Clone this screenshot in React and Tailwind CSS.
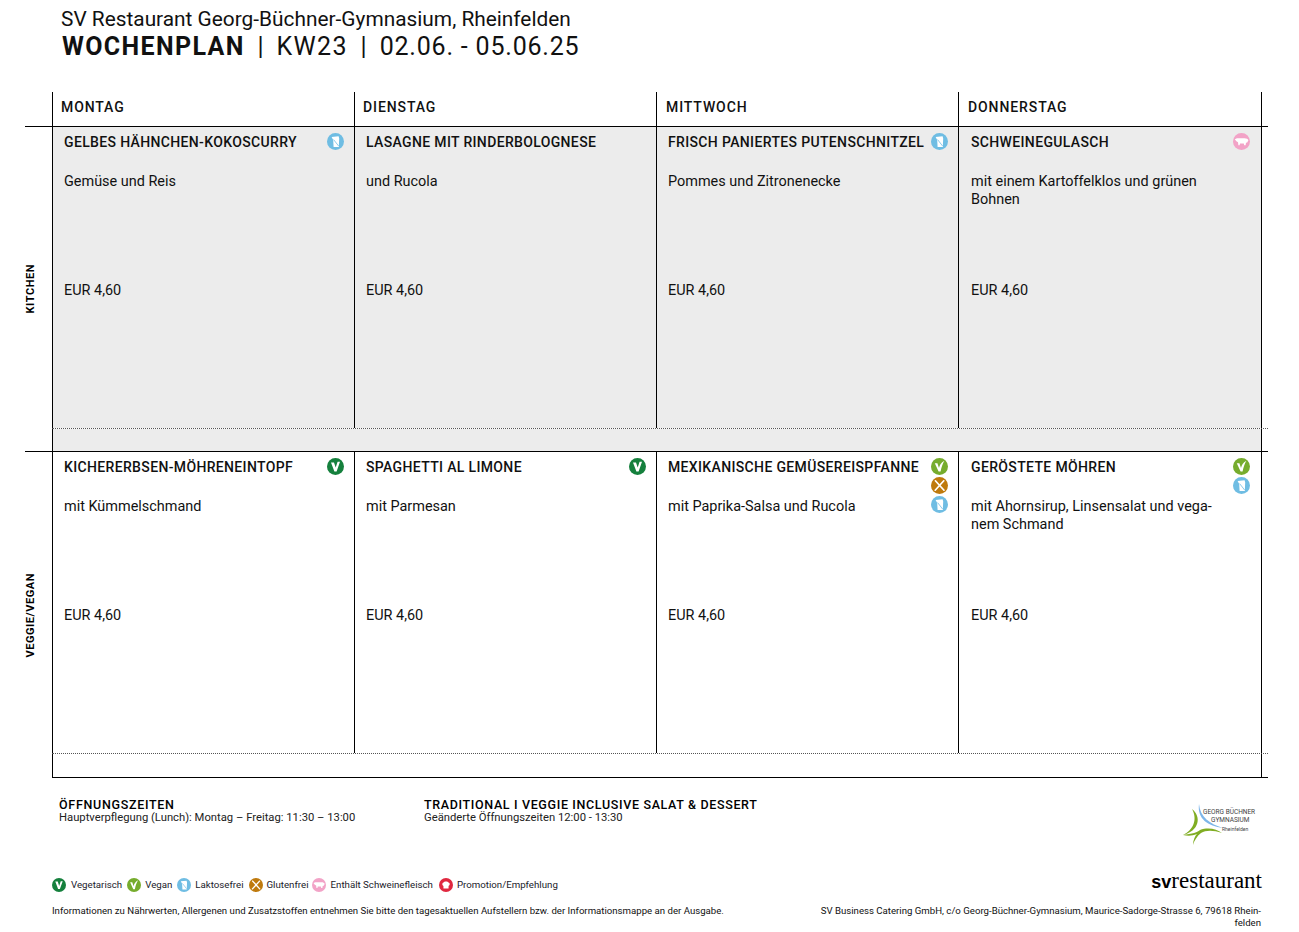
const F = { fontFamily: 'Roboto, sans-serif' };

function Veg({ c = '#15803d', s = 17 }) {
  return (
    <svg width={s} height={s} viewBox="0 0 17 17" className="shrink-0">
      <circle cx="8.5" cy="8.5" r="8.5" fill={c} />
      <path d="M4 4.4 L7 4.4 L8.7 9.6 L10.6 3.8 L13 3.8 L9.6 13.4 L7.4 13.4 Z" fill="#fff" />
    </svg>
  );
}
function Vegan({ s = 17 }) {
  return (
    <svg width={s} height={s} viewBox="0 0 17 17" className="shrink-0">
      <circle cx="8.5" cy="8.5" r="8.5" fill="#76ac2d" />
      <path d="M3.8 5.2 L6.4 5.2 L8 10 C8.6 7.4 10 4.4 13.4 2.8 C11.6 5.6 10.4 9.4 9.6 13.6 L7.6 13.6 Z" fill="#fff" />
    </svg>
  );
}
function Lakt({ s = 17 }) {
  return (
    <svg width={s} height={s} viewBox="0 0 17 17" className="shrink-0">
      <circle cx="8.5" cy="8.5" r="8.5" fill="#6fbde3" />
      <path d="M4.6 4 L11.6 3.2 L12.2 5.4 L11.8 14 L6.6 14 L6.2 7 Z" fill="#fff" />
      <path d="M6.6 6.6 L11.6 13" stroke="#6fbde3" strokeWidth="0.8" fill="none" />
    </svg>
  );
}
function Gluten({ s = 17 }) {
  return (
    <svg width={s} height={s} viewBox="0 0 17 17" className="shrink-0">
      <circle cx="8.5" cy="8.5" r="8.5" fill="#bf7a0d" />
      <path d="M4.4 3.8 L13 13.2 M12.8 3.8 L4.2 13.2" stroke="#fff" strokeWidth="1.7" strokeLinecap="round" fill="none" />
    </svg>
  );
}
function Pig({ s = 17 }) {
  return (
    <svg width={s} height={s} viewBox="0 0 17 17" className="shrink-0">
      <circle cx="8.5" cy="8.5" r="8.5" fill="#f2a3c7" />
      <path d="M1.8 6.2 L4 5.2 L11.4 5.2 C13.4 5.2 15.2 6 15.4 7.2 L14.2 9.4 L13 9.8 L12.6 12.2 L11.2 12.2 L10.8 10.4 L7 10.4 L6.6 12.2 L5.4 12.2 L5 9.2 L3.4 8.2 Z" fill="#fff" />
    </svg>
  );
}
function Chef({ s = 17 }) {
  return (
    <svg width={s} height={s} viewBox="0 0 17 17" className="shrink-0">
      <circle cx="8.5" cy="8.5" r="8.5" fill="#e0273f" />
      <path d="M5.4 9.6 C3.6 9.2 3.4 6 5.6 5.6 C6.2 3.8 10.8 3.8 11.4 5.6 C13.6 6 13.4 9.2 11.6 9.6 L11.6 12.6 L5.4 12.6 Z" fill="#fff" />
    </svg>
  );
}

function Cell({ title, body, icons, shade, wrap, last }) {
  return (
    <div className={`border-l border-black pt-[6px] flex flex-col text-[#111] ${last ? 'pl-[12px] pr-[11px]' : 'pl-[11px] pr-[10px]'} ${shade ? 'bg-[#ececec]' : ''}`}>
      <div className="flex justify-between items-start h-[40px]">
        <div className="text-[14px] leading-[18px] font-medium whitespace-nowrap tracking-[0.35px]">{title}</div>
        <div className="flex flex-col gap-[2px] shrink-0">{icons}</div>
      </div>
      <div className={`text-[14.45px] leading-[18px] h-[99px] ${wrap || ''}`}>{body}</div>
      <div className="text-[14.45px] leading-[18px] pt-[1px] mt-[9px]">EUR 4,60</div>
    </div>
  );
}

function Row({ label, cells, shade, border }) {
  return (
    <div className={`flex ${border ? 'border-b border-black h-[325px]' : 'h-[326px]'}`}>
      <div className="w-[27px] flex items-center justify-start">
        <span className="[writing-mode:vertical-rl] rotate-180 text-[11px] font-bold text-black leading-none tracking-[0.55px]">{label}</span>
      </div>
      <div className={`w-[1216px] flex flex-col ${border ? '' : 'border-b border-black'}`}>
        <div className="grid grid-cols-[302px_302px_302px_303px_7px] h-[302px] border-b border-dotted border-[#555]">
          {cells}
          <div className="border-l border-black" />
        </div>
        <div className={`flex-1 border-l border-r border-black w-[1210px] ${shade ? 'bg-[#ececec]' : ''}`} />
      </div>
    </div>
  );
}

const Head = ({ children, wide }) => (
  <div className={`border-l border-black pt-[6px] text-[14px] leading-[18px] font-medium tracking-[0.9px] text-[#111] ${wide ? 'pl-[9px]' : 'pl-[8px]'}`}>{children}</div>
);

const legend = [
  [<Veg s={14} />, 'Vegetarisch', 'mr-[5px] gap-[5px]'],
  [<Vegan s={14} />, 'Vegan', 'mr-[5px] gap-[4px]'],
  [<Lakt s={14} />, 'Laktosefrei', 'mr-[5px] gap-[4px]'],
  [<Gluten s={14} />, 'Glutenfrei', 'mr-[3px] gap-[4px]'],
  [<Pig s={14} />, 'Enthält Schweinefleisch', 'mr-[6px] gap-[5px]'],
  [<Chef s={14} />, 'Promotion/Empfehlung', 'gap-[4px]'],
];

export default function App() {
  return (
    <div style={F} className="w-[1299px] h-[932px] bg-white text-black overflow-hidden relative">
      <div className="pl-[61px] pt-[7px] h-[92px]">
        <div className="text-[20.85px] leading-[24px] text-[#111]">SV Restaurant Georg-Büchner-Gymnasium, Rheinfelden</div>
        <div className="pl-[1px] text-[25px] leading-[31px] tracking-[0.8px] whitespace-pre text-[#111]"><span className="font-bold tracking-[1.35px]">WOCHENPLAN</span><span className="tracking-[0.2px]">{'  |  '}</span><span className="tracking-[1.3px]">KW23</span><span className="tracking-[0.2px]">{'  |  '}</span>02.06. - 05.06.25</div>
      </div>

      <div className="ml-[25px] w-[1243px]">
        <div className="flex border-b border-black h-[35px]">
          <div className="w-[27px]" />
          <div className="grid grid-cols-[302px_302px_302px_303px_7px] w-[1216px]">
            <Head>MONTAG</Head>
            <Head>DIENSTAG</Head>
            <Head wide>MITTWOCH</Head>
            <Head wide>DONNERSTAG</Head>
            <div className="border-l border-black" />
          </div>
        </div>

        <Row label="KITCHEN" shade border cells={<>
          <Cell shade title="GELBES HÄHNCHEN-KOKOSCURRY" body="Gemüse und Reis" icons={<Lakt />} />
          <Cell shade title="LASAGNE MIT RINDERBOLOGNESE" body="und Rucola" />
          <Cell shade title="FRISCH PANIERTES PUTENSCHNITZEL" body="Pommes und Zitronenecke" icons={<Lakt />} />
          <Cell shade last title="SCHWEINEGULASCH" body="mit einem Kartoffelklos und grünen Bohnen" icons={<Pig />} wrap="pr-[40px]" />
        </>} />

        <Row label="VEGGIE/VEGAN" cells={<>
          <Cell title="KICHERERBSEN-MÖHRENEINTOPF" body="mit Kümmelschmand" icons={<Veg />} />
          <Cell title="SPAGHETTI AL LIMONE" body="mit Parmesan" icons={<Veg />} />
          <Cell title="MEXIKANISCHE GEMÜSEREISPFANNE" body="mit Paprika-Salsa und Rucola" icons={<><Vegan /><Gluten /><Lakt /></>} />
          <Cell last title="GERÖSTETE MÖHREN" body={<>mit Ahornsirup, Linsensalat und vega-<br />nem Schmand</>} icons={<><Vegan /><Lakt /></>} />
        </>} />
      </div>

      <div className="flex pl-[59px] pt-[20px] h-[100px]">
        <div className="w-[365px]">
          <div className="text-[12.5px] leading-[13px] font-medium tracking-[0.7px]">ÖFFNUNGSZEITEN</div>
          <div className="text-[11.26px] leading-[13px] text-[#222]">Hauptverpflegung (Lunch): Montag – Freitag: 11:30 – 13:00</div>
        </div>
        <div>
          <div className="text-[12.5px] leading-[13px] font-medium tracking-[0.65px]">TRADITIONAL I VEGGIE INCLUSIVE SALAT &amp; DESSERT</div>
          <div className="text-[11.26px] leading-[13px] text-[#222]">Geänderte Öffnungszeiten 12:00 - 13:30</div>
        </div>
        <div className="ml-auto mr-[45px] mt-[5px] relative w-[74px] h-[46px]">
          <svg width="74" height="46" viewBox="0 0 74 46" className="absolute left-0 top-0">
            <path d="M19 1 C20 14 30 21 43 25 C28 23 17 16 19 1 Z" fill="#7db6ea" />
            <path d="M12 6 C22 14 19 28 3 32 C13 27 18 17 12 6 Z" fill="#80ad23" />
            <path d="M3 32 C12 31 18 29 20 27 C28 24 37 26 42 30 C33 27 26 27 21 30 C17 33 14 38 13 42 C13 37 15 33 17 31 C12 33 8 33 3 32 Z" fill="#80ad23" />
          </svg>
          <div className="absolute left-[23px] top-[4px] text-[6.5px] leading-[10px] text-[#444] whitespace-nowrap">GEORG BÜCHNER</div>
          <div className="absolute left-[31px] top-[12px] text-[6.5px] leading-[10px] text-[#444] whitespace-nowrap">GYMNASIUM</div>
          <div className="absolute left-[42px] top-[21px] text-[5px] leading-[10px] text-[#444] whitespace-nowrap">Rheinfelden</div>
        </div>
      </div>

      <div className="flex items-center pl-[52px] h-[14px] text-[9.7px] text-[#1a1a2a]">
        {legend.map(([ic, t, m]) => (
          <div key={t} className={`flex items-center ${m}`}>{ic}<span className="whitespace-nowrap">{t}</span></div>
        ))}
      </div>
      <div className="absolute right-[37px] top-[868px] leading-[26px] text-[23px] text-black whitespace-nowrap" style={{ fontFamily: '"Liberation Serif", serif' }}>
        <span className="font-bold text-[18px]" style={{ fontFamily: '"Liberation Sans", sans-serif' }}>sv</span>restaurant
      </div>

      <div className="flex justify-between pl-[52px] pr-[38px] mt-[13px] text-[9.65px] leading-[12px] text-[#111]">
        <div className="whitespace-nowrap">Informationen zu Nährwerten, Allergenen und Zusatzstoffen entnehmen Sie bitte den tagesaktuellen Aufstellern bzw. der Informationsmappe an der Ausgabe.</div>
        <div className="text-right w-[445px]">SV Business Catering GmbH, c/o Georg-Büchner-Gymnasium, Maurice-Sadorge-Strasse 6, 79618 Rhein-<br />felden</div>
      </div>
    </div>
  );
}
